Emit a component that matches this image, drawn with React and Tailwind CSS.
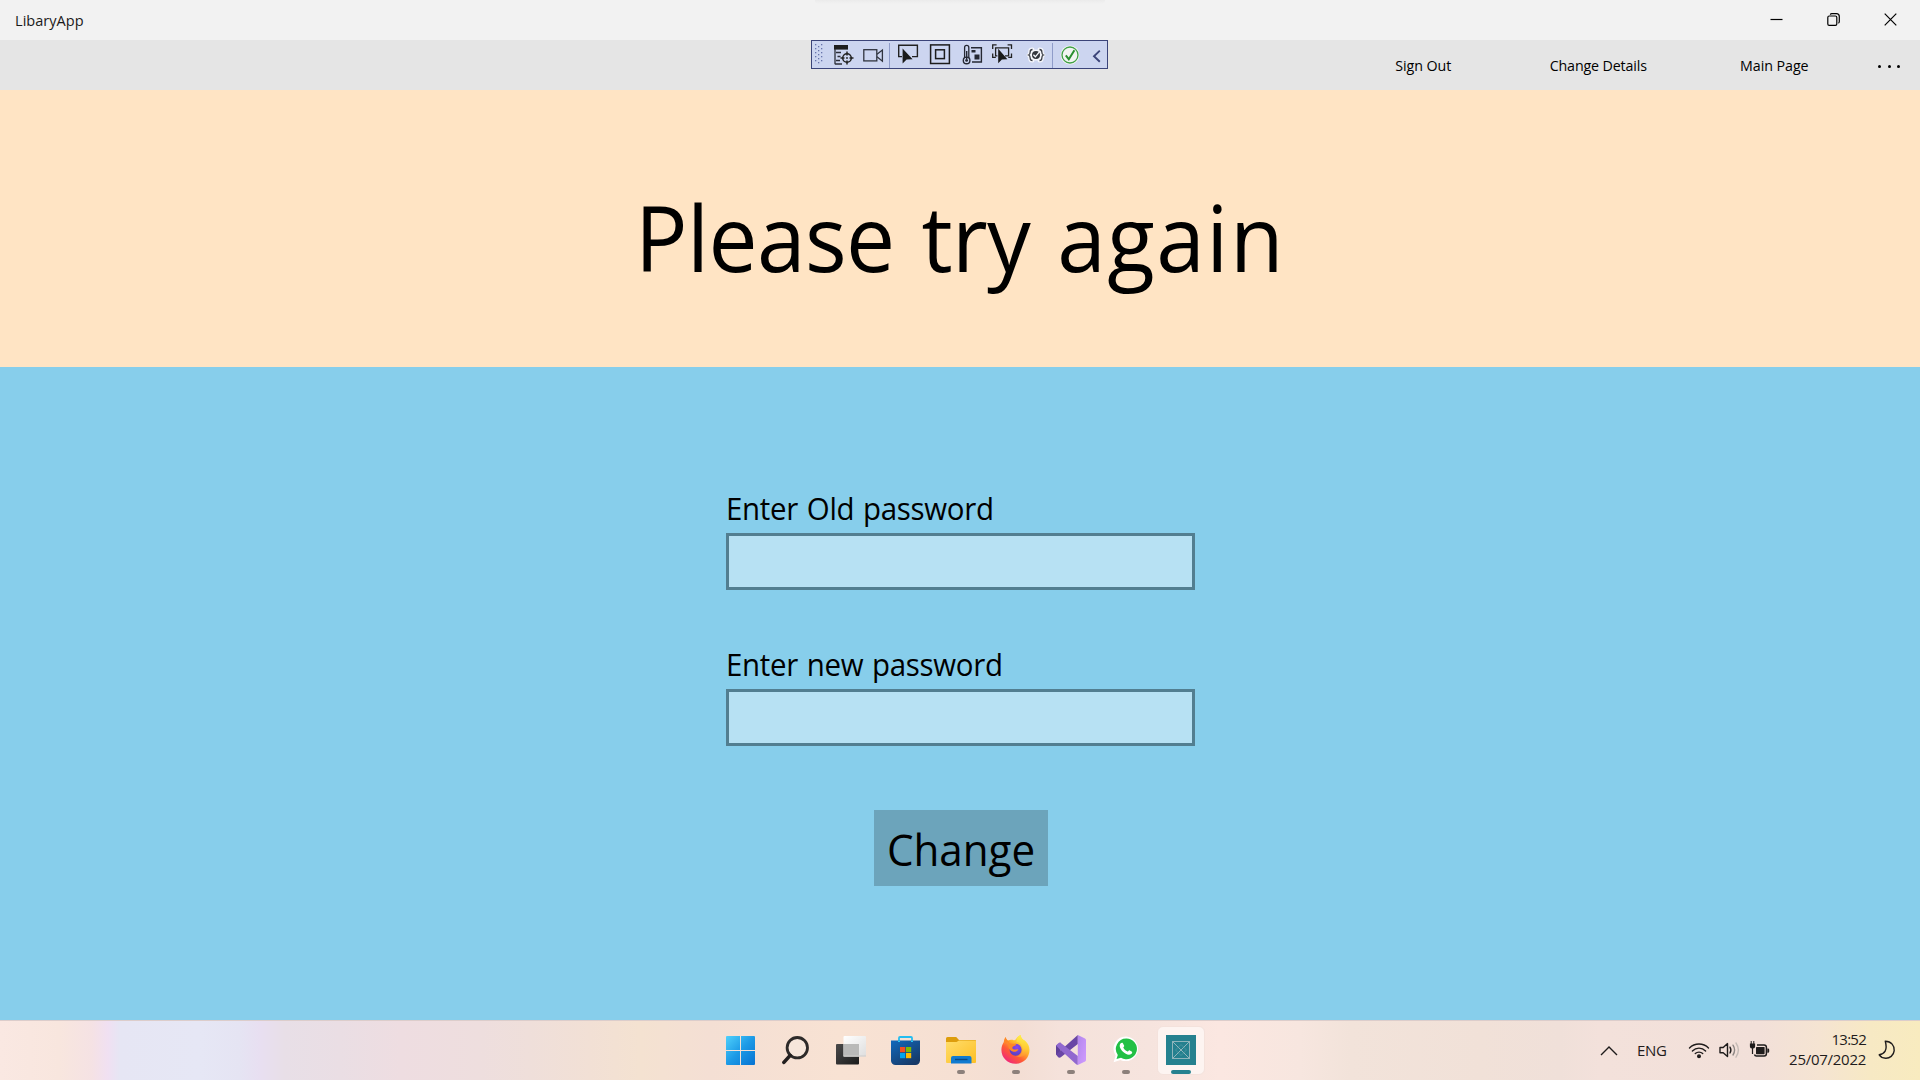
const NAV_ITEMS = [
  { label: "Sign Out", spacing: "tracking-[-0.05px] pr-px" },
  { label: "Change Details", spacing: "tracking-[-0.15px] pr-px" },
  { label: "Main Page", spacing: "tracking-[-0.05px] pr-px" },
];

function WindowControls() {
  return (
    <div className="flex h-full pr-px text-black">
      <button className="flex h-full w-[57px] items-center justify-center">
        <svg width="13" height="13" viewBox="0 0 13 13" fill="none" stroke="currentColor" strokeWidth="1.2">
          <path d="M0.5 6.5H12.5" />
        </svg>
      </button>
      <button className="flex h-full w-[57px] items-center justify-center">
        <svg width="13" height="13" viewBox="0 0 13 13" fill="none" stroke="currentColor" strokeWidth="1.2">
          <rect x="0.8" y="3" width="9" height="9.4" rx="1.4" />
          <path d="M3.2 1.6C3.6 1 4 0.7 4.8 0.7H9.4C11.2 0.7 12.3 1.8 12.3 3.6V8.6C12.3 9.4 12 9.9 11.4 10.2" />
        </svg>
      </button>
      <button className="flex h-full w-[57px] items-center justify-center">
        <svg width="13" height="13" viewBox="0 0 13 13" fill="none" stroke="currentColor" strokeWidth="1.2">
          <path d="M0.7 0.7L12.3 12.3M12.3 0.7L0.7 12.3" />
        </svg>
      </button>
    </div>
  );
}

function TitleBar() {
  return (
    <header className="relative flex h-10 items-center justify-between bg-[#f2f2f2]">
      <div className="absolute left-[815px] top-0 h-1 w-[290px] rounded-b-full bg-linear-to-b from-[#ebebeb] to-[#f2f2f2]" />
      <span className="origin-left scale-x-[0.97] pl-[15.5px] text-[15px] leading-5 text-[#1a1a1a]">LibaryApp</span>
      <div className="-mt-0.5 h-[38px]">
        <WindowControls />
      </div>
    </header>
  );
}

function Tool({ x, w, className, children }) {
  return (
    <svg width={w} height="27" viewBox={`${x} 1 ${w} 27`} fill="none" className={"shrink-0 " + className}>
      {children}
    </svg>
  );
}

const GRIP_ROWS = [4, 8, 12, 16, 20];

function Braces() {
  return (
    <path d="M221.5 9.5c-1.8 0-2.3.8-2.3 2.2 0 2-.2 2.8-1.5 3.3 1.3.5 1.5 1.3 1.5 3.3 0 1.4.5 2.2 2.3 2.2M228.5 9.5c1.8 0 2.3.8 2.3 2.2 0 2 .2 2.8 1.5 3.3-1.3.5-1.5 1.3-1.5 3.3 0 1.4-.5 2.2-2.3 2.2" />
  );
}

function DebugToolbar() {
  return (
    <div className="absolute left-[811px] top-0 flex h-[29px] w-[297px] border border-[#3b4479] bg-[#ccd5f0]">
      <Tool x={4} w={10} className="ml-[3px]">
        {GRIP_ROWS.map((y) => (
          <g key={y} fill="#6774ab">
            <rect x="4" y={y} width="1.3" height="1.3" />
            <rect x="10" y={y} width="1.3" height="1.3" />
            <rect x="7" y={y + 2} width="1.3" height="1.3" />
          </g>
        ))}
      </Tool>
      <Tool x={22} w={22} className="ml-2">
        <rect x="23" y="5" width="14" height="4.6" fill="#1e1e1e" />
        <path d="M24 9V24.2M25 12.5h5M26.5 16.5h3M25 20.5h4M24 24h7" stroke="#2c2f38" strokeWidth="1.3" />
        <circle cx="36" cy="18" r="4.3" stroke="#222" strokeWidth="1.5" />
        <path d="M36 11.5v4M36 20.5v4M29.5 18h4M38.5 18h4" stroke="#222" strokeWidth="1.5" />
        <circle cx="36" cy="18" r="0.9" fill="#222" />
      </Tool>
      <Tool x={51} w={22} className="ml-[7px]">
        <rect x="52.8" y="9.7" width="13" height="11.2" stroke="#30343f" strokeWidth="1.3" />
        <path d="M66 14.2L71.4 10V21.2L66 16.8" stroke="#30343f" strokeWidth="1.3" />
      </Tool>
      <Tool x={78} w={1} className="ml-[5px]">
        <rect x="78" y="3" width="1" height="25" fill="#8f9cc9" />
      </Tool>
      <Tool x={86} w={22} className="ml-[7px]">
        <path d="M91 16.6H87.7V5.2H106.4V16.6H101" stroke="#222" strokeWidth="1.4" />
        <path d="M91.6 8.6V23.4L95.6 19.4L101.6 19.2Z" fill="#1a1a1a" />
      </Tool>
      <Tool x={118} w={22} className="ml-[10px]">
        <rect x="119.6" y="4.9" width="18.8" height="18.6" stroke="#1c1c1c" strokeWidth="1.5" />
        <rect x="124.6" y="9.8" width="8.8" height="8.8" stroke="#1c1c1c" strokeWidth="1.5" />
      </Tool>
      <Tool x={150} w={22} className="ml-[10px]">
        <path d="M153.6 18V7.4a2.1 2.1 0 0 1 4.2 0V18" stroke="#252833" strokeWidth="1.3" />
        <circle cx="155.6" cy="20.4" r="3.3" stroke="#252833" strokeWidth="1.4" />
        <path d="M155.7 11v8" stroke="#252833" strokeWidth="1.4" />
        <circle cx="155.6" cy="20.4" r="1.4" fill="#252833" />
        <path d="M160 7.7H170.4V22H161" stroke="#252833" strokeWidth="1.4" />
        <path d="M160.5 10h4v2.4h-4zM163.5 14.5h5v5h-5z" fill="#252833" />
      </Tool>
      <Tool x={180} w={22} className="ml-2">
        <path d="M186.4 15.8H184.6V7.8H197.6V15.8H194" stroke="#222" strokeWidth="1.3" />
        <path d="M181.7 9V4.9H185.6M196.6 4.9H200.5V9M200.5 13.6V17.4H197.2M181.7 13.6V17.4H184.8" stroke="#222" strokeWidth="1.3" />
        <path d="M187.2 8.8V23.2L190.9 19.4L196.4 19.2Z" fill="#1a1a1a" />
      </Tool>
      <Tool x={215} w={20} className="ml-[13px]">
        <g stroke="#f5f6fb" strokeWidth="4" strokeLinecap="round" strokeLinejoin="round">
          <Braces />
        </g>
        <circle cx="225" cy="15" r="5.6" fill="#f5f6fb" />
        <g stroke="#3a3d45" strokeWidth="1.3">
          <Braces />
        </g>
        <circle cx="225" cy="15" r="4" fill="#33363d" />
        <path d="M222.4 14.8L224.4 16.8L228.8 11.4" stroke="#f5f6fb" strokeWidth="1.3" />
      </Tool>
      <Tool x={241} w={1} className="ml-1.5">
        <rect x="241" y="3" width="1" height="25" fill="#8f9cc9" />
      </Tool>
      <Tool x={249} w={20} className="ml-[7px]">
        <circle cx="259" cy="15" r="9.4" fill="#f4f6f4" />
        <circle cx="259" cy="15" r="8" fill="#f2f5f2" stroke="#3fa045" strokeWidth="1.3" />
        <path d="M254.8 15.4L257.8 19.2L263.4 10.2" stroke="#2a8f30" strokeWidth="2" />
      </Tool>
      <Tool x={280} w={11} className="ml-[11px]">
        <path d="M288.8 10.6L283 16.2L288.8 21.8" stroke="#3b4479" strokeWidth="1.9" />
      </Tool>
    </div>
  );
}

function CommandBar() {
  return (
    <nav className="relative flex h-[50px] items-center justify-end bg-[#e5e5e5]">
      <DebugToolbar />
      {NAV_ITEMS.map((item) => (
        <button
          key={item.label}
          className={"w-[175.5px] scale-x-[0.95] text-center text-[15px] leading-5 text-black " + item.spacing}
        >
          {item.label}
        </button>
      ))}
      <button className="flex h-full w-[58px] items-center justify-center gap-[6.5px] pr-[3.5px] pt-[3px]">
        <span className="size-[3px] rounded-full bg-black" />
        <span className="size-[3px] rounded-full bg-black" />
        <span className="size-[3px] rounded-full bg-black" />
      </button>
    </nav>
  );
}

function PasswordField({ id, label, className }) {
  return (
    <div className={"flex flex-col " + className}>
      <label
        htmlFor={id}
        className="origin-left scale-x-[0.95] text-[31px] leading-10 tracking-[-0.3px] [word-spacing:1.4px]"
      >
        {label}
      </label>
      <input id={id} type="password" className="mt-[5px] h-[57px] border-3 border-[#527e90] bg-[#b7e1f3] outline-none" />
    </div>
  );
}

function PasswordForm() {
  return (
    <form className="mx-auto flex w-[469px] flex-col pt-[121px] text-black">
      <PasswordField id="old" label="Enter Old password" className="" />
      <PasswordField id="new" label="Enter new password" className="mt-[54px]" />
      <button type="button" className="ml-[148px] mt-16 h-[76px] w-[174px] bg-[#6ca4bb] pt-1 text-black">
        <span className="block scale-x-[0.98] text-[43px] leading-[72px]">Change</span>
      </button>
    </form>
  );
}

function StartIcon() {
  return (
    <svg width="29" height="29" viewBox="0 0 29 29">
      <defs>
        <linearGradient id="start" x1="0" y1="0" x2="29" y2="29" gradientUnits="userSpaceOnUse">
          <stop offset="0" stopColor="#4fd0fb" />
          <stop offset="0.5" stopColor="#1c9ae6" />
          <stop offset="1" stopColor="#0672d2" />
        </linearGradient>
      </defs>
      <path fill="url(#start)" d="M1 0h13v14H0V1a1 1 0 0 1 1-1zM15 0h13a1 1 0 0 1 1 1v13H15zM0 15h14v14H1a1 1 0 0 1-1-1zM15 15h14v13a1 1 0 0 1-1 1H15z" />
    </svg>
  );
}

function SearchIcon() {
  return (
    <svg width="27" height="29" viewBox="0 0 27 29" fill="none">
      <circle cx="15.3" cy="11.7" r="10.2" fill="#f6e6db" stroke="#2d2a29" strokeWidth="2.8" />
      <path d="M8.2 19.4L1.9 26.4" stroke="#221f1f" strokeWidth="3.6" strokeLinecap="round" />
    </svg>
  );
}

function TaskViewIcon() {
  return (
    <svg width="30" height="29" viewBox="0 0 30 29">
      <defs>
        <linearGradient id="tvDark" x1="0" y1="0" x2="1" y2="1">
          <stop offset="0" stopColor="#4a4a4a" />
          <stop offset="1" stopColor="#1b1b1b" />
        </linearGradient>
        <linearGradient id="tvLight" x1="0" y1="0" x2="1" y2="1">
          <stop offset="0" stopColor="#fff" />
          <stop offset="1" stopColor="#dedede" />
        </linearGradient>
      </defs>
      <rect y="8" width="23" height="20.5" rx="1" fill="url(#tvDark)" />
      <rect x="7.5" width="22.5" height="20.5" rx="1" fill="url(#tvLight)" />
      <rect x="7.5" y="8" width="15.5" height="12.5" fill="#b9b9b8" />
      <path d="M7.5 20H30" stroke="#cfcdcb" />
    </svg>
  );
}

function StoreIcon() {
  return (
    <svg width="29" height="29" viewBox="0 0 29 29">
      <defs>
        <linearGradient id="store" x1="0" y1="0" x2="0.7" y2="1">
          <stop offset="0" stopColor="#1169bd" />
          <stop offset="1" stopColor="#173a68" />
        </linearGradient>
      </defs>
      <path d="M8 6V2a1 1 0 0 1 1-1h11a1 1 0 0 1 1 1v4" fill="none" stroke="#24bdf0" strokeWidth="1.8" />
      <path d="M0 4.5h29V24.5a4.5 4.5 0 0 1-4.5 4.5h-20A4.5 4.5 0 0 1 0 24.5z" fill="url(#store)" />
      <path d="M7 4.5h2V6H7zM20 4.5h2V6h-2z" fill="#2cc4f4" />
      <rect x="9" y="11" width="5.2" height="5.2" fill="#f25022" />
      <rect x="15" y="11" width="5.2" height="5.2" fill="#7fba00" />
      <rect x="9" y="17" width="5.2" height="5.2" fill="#00a4ef" />
      <rect x="15" y="17" width="5.2" height="5.2" fill="#ffb900" />
    </svg>
  );
}

function ExplorerIcon() {
  return (
    <svg width="30" height="27" viewBox="0 0 30 27">
      <defs>
        <linearGradient id="folder" x1="0" y1="0" x2="1" y2="1">
          <stop offset="0" stopColor="#ffdd6b" />
          <stop offset="1" stopColor="#fdbf24" />
        </linearGradient>
      </defs>
      <path d="M0 1.500A1.500 1.500 0 0 1 1.500 0h8.700l2.800 3H29a1 1 0 0 1 1 1v6H0z" fill="#dd9d0c" />
      <path d="M0 5h10.500l2.500-1.500H29a1 1 0 0 1 1 1V25a1 1 0 0 1-1 1H1a1 1 0 0 1-1-1z" fill="url(#folder)" />
      <path d="M5 26.500V21a2 2 0 0 1 2-2h16.500a2 2 0 0 1 2 2v5.500z" fill="#117bd0" />
      <path d="M9 22.500h12.500" stroke="#0a4a86" strokeWidth="1.4" />
    </svg>
  );
}

function FirefoxIcon() {
  return (
    <svg width="29" height="29" viewBox="0 0 29 29">
      <defs>
        <linearGradient id="ffBody" x1="0.85" y1="0.1" x2="0.2" y2="0.95">
          <stop offset="0" stopColor="#fff04a" />
          <stop offset="0.35" stopColor="#ffb52a" />
          <stop offset="0.65" stopColor="#ff5b35" />
          <stop offset="1" stopColor="#f0257d" />
        </linearGradient>
        <linearGradient id="ffFlame" x1="0.5" y1="0" x2="0.4" y2="1">
          <stop offset="0" stopColor="#fff04a" />
          <stop offset="0.6" stopColor="#ffc933" />
          <stop offset="1" stopColor="#ff8a33" />
        </linearGradient>
        <radialGradient id="ffGlobe" cx="0.6" cy="0.3" r="0.8">
          <stop offset="0" stopColor="#8a48ee" />
          <stop offset="1" stopColor="#4f3fbd" />
        </radialGradient>
      </defs>
      <path d="M4.500 2c.5 1.600 1.200 2.600 2.300 3.400 2-.7 4-.8 6-.2C14.500 5.400 15 4 15.300 3.600 16.400 1.600 18.200.4 19.600 0c.2 2.400 1 3.600 3 5 1 .4 1.600.8 2 1.300C27.200 8.800 28.500 11.400 28.500 15c0 7.800-6.200 13.800-14 13.800S.4 22.800.4 15c0-3.200.9-5.600 2.300-7.700C3 5.400 3.600 3.600 4.500 2z" fill="url(#ffBody)" />
      <path d="M19.600 0c-2.600 1.200-4.600 4-3.900 7 3.600.5 6 3.200 6 7.200 0 3.700-2.700 6.800-6.700 7.300 6.800 1.800 12.700-2.500 12.300-8.500-.2-3-2-5.400-4.200-7.400C21 3.700 19.800 2.400 19.600 0z" fill="url(#ffFlame)" />
      <circle cx="14.6" cy="14.8" r="6" fill="url(#ffGlobe)" />
      <path d="M4.500 2c-1 2-1.500 4.500-1.300 7.400C4.500 7.500 7 6.700 9.500 8.500c1.500.5 4-.2 5.800.7-.3 1.600-2.600 1.700-3.800 2.800-.4 1.300.4 2.300 1.600 2.500 1.500.2 2.700-.7 4.300-.2-1 2.300-3 2.800-4.900 2.400-3-.7-5.100-2.800-5-5.600C6.500 9 7 7.500 9 7 6.800 6.200 5.200 4.800 4.500 2z" fill="#ff8727" />
    </svg>
  );
}

function VisualStudioIcon() {
  return (
    <svg width="30" height="30" viewBox="0 0 30 30">
      <defs>
        <linearGradient id="vsRight" x1="0" y1="0" x2="1" y2="1">
          <stop offset="0" stopColor="#b287ec" />
          <stop offset="1" stopColor="#d09bff" />
        </linearGradient>
      </defs>
      <path d="M0 10.500L4.600 7.500V22.300L0 19.600z" fill="#5f3f98" />
      <path d="M0 19.600L21.800 0V9L4.800 22.300Q3 23.200 2 22z" fill="#6a46a6" />
      <path d="M0 10.500L2.300 8.200Q3.600 7.200 4.800 7.900L21.800 21V30Q20.500 30 19.300 28.600L4 14.500z" fill="#9168cf" />
      <path d="M21.800 0L29 3.400Q30 4 30 5V25Q30 26 29 26.600L21.800 30z" fill="url(#vsRight)" />
    </svg>
  );
}

function WhatsAppIcon() {
  return (
    <svg width="26" height="27" viewBox="0 0 26 27">
      <path d="M13.200.5A12.300 12.300 0 1 1 7.400 23.900L.6 26.200 2.600 19.500A12.300 12.300 0 0 1 13.200.5z" fill="#fff" />
      <path d="M13.200 2.500A10.400 10.400 0 1 1 8 21.700L3.500 23.100 4.800 18.900A10.400 10.400 0 0 1 13.200 2.500z" fill="#22c044" />
      <path d="M9.900 7.200c-.4-.8-1.600-.6-2.200.1-2 2.300-.6 5.500 2 8.200 2.800 2.700 6.100 4.200 8.500 2.500 1-.7 1.200-2 .8-2.300l-2.600-1.400c-.7-.3-1.200 1.400-1.900 1.300-1.700-.6-3.500-2.400-4.200-4 0-.7 1.100-1.200.9-1.900z" fill="#fff" />
    </svg>
  );
}

function AppTileIcon() {
  return (
    <svg width="30" height="30" viewBox="0 0 30 30" fill="none">
      <rect width="30" height="30" fill="#25818f" />
      <rect x="6.500" y="6.500" width="17" height="17" stroke="#8fb5bb" />
      <path d="M6.500 6.500L23.500 23.500M23.500 6.500L6.500 23.500" stroke="#8fb5bb" />
      <path d="M15 9.500L20.500 15L15 20.500L9.500 15z" stroke="#5a9da7" strokeWidth="0.6" />
    </svg>
  );
}

const APPS = [
  { name: "Start", icon: <StartIcon />, open: false, shift: "" },
  { name: "Search", icon: <SearchIcon />, open: false, shift: "" },
  { name: "Task View", icon: <TaskViewIcon />, open: false, shift: "" },
  { name: "Store", icon: <StoreIcon />, open: false, shift: "" },
  { name: "File Explorer", icon: <ExplorerIcon />, open: true, shift: "" },
  { name: "Firefox", icon: <FirefoxIcon />, open: true, shift: "pb-px" },
  { name: "Visual Studio", icon: <VisualStudioIcon />, open: true, shift: "pb-px" },
  { name: "WhatsApp", icon: <WhatsAppIcon />, open: true, shift: "pb-px" },
];

function SystemTray() {
  return (
    <div className="ml-auto flex h-full items-center text-[#1f1c1c]">
      <svg width="18" height="10" viewBox="0 0 18 10" fill="none" stroke="currentColor" strokeWidth="1.4">
        <path d="M1 9L9 1L17 9" />
      </svg>
      <span className="-mt-0.5 ml-[19px] w-[31px] text-[15px] leading-5 tracking-[-0.3px]">ENG</span>
      <svg className="ml-5 -mt-0.5" width="22" height="18" viewBox="0 0 22 18" fill="none" stroke="currentColor" strokeWidth="1.4" strokeLinecap="round">
        <path d="M1.500 7A13.400 13.400 0 0 1 20.500 7" />
        <path d="M4.400 9.900A9.300 9.300 0 0 1 17.600 9.900" />
        <path d="M7.300 12.600A5.300 5.300 0 0 1 14.700 12.600" />
        <circle cx="11" cy="15.2" r="1.3" fill="currentColor" />
      </svg>
      <svg className="ml-[9px] -mt-0.5" width="22" height="18" viewBox="0 0 22 18" fill="none" stroke="currentColor" strokeWidth="1.4" strokeLinecap="round" strokeLinejoin="round">
        <path d="M1 6.500H4.200L8.500 2.600V15.600L4.200 11.800H1z" />
        <path d="M11 6.200Q12.800 9.100 11 12" />
        <path d="M14 4.200Q17.200 9.100 14 14" stroke="#8f8885" />
        <path d="M17 2Q21.800 9.100 17 16.200" stroke="#c5bbb6" />
      </svg>
      <svg className="ml-2 -mt-0.5" width="22" height="18" viewBox="0 0 22 18" fill="none">
        <path d="M8 4H15.200A2.200 2.200 0 0 1 17.400 6.200V12.800A2.200 2.200 0 0 1 15.200 15H7.400A2 2 0 0 1 5.500 13.500" stroke="currentColor" strokeWidth="1.5" />
        <rect x="7" y="6" width="8.6" height="7.2" rx="0.6" fill="currentColor" />
        <path d="M18.300 7.500h.7a1.200 1.200 0 0 1 1.200 1.200v1.800A1.200 1.200 0 0 1 19 11.700h-.7z" fill="currentColor" />
        <path d="M1.700 0h1V2.400h1.600V0h1V2.400h.8v3a2 2 0 0 1-2 2v5.500H2.900V7.400a2 2 0 0 1-2-2V2.400h.8z" fill="currentColor" />
      </svg>
      <div className="-mt-1 ml-[18px] w-[77px] text-right text-[15px] leading-5">
        <div className="tracking-[-0.75px]">13:52</div>
        <div className="whitespace-nowrap tracking-[-0.27px]">25/07/2022</div>
      </div>
      <svg className="-mt-0.5 ml-3 mr-6" width="18" height="20" viewBox="0 0 18 20" fill="none" stroke="currentColor" strokeWidth="1.4" strokeLinejoin="round">
        <path d="M7.300 1.200C13.300 1.400 16.600 5.600 16.200 10.600C15.700 15.600 11.600 18.400 7.600 18.200C4.600 18 2.500 16.800 1.200 14.800C6.400 13.800 9.800 10.400 7.300 1.200z" />
      </svg>
    </div>
  );
}

function Taskbar() {
  return (
    <footer className="flex h-[60px] border-t border-[#dccdcb] bg-[linear-gradient(90deg,#fae8e2_0px,#f8e6de_60px,#f5e2e4_92px,#f0e0f2_108px,#e6e6f4_120px,#e6e7f5_200px,#e5e4f3_240px,#e8dff1_260px,#e8dfe7_285px,#eadee4_340px,#eedde1_400px,#eedede_480px,#efdfda_530px,#f2e0d5_590px,#f4e2d1_640px,#f4dfd4_710px,#f8e2d3_840px,#f6e0d3_960px,#f3ded4_1020px,#f5e2db_1060px,#f6e4de_1150px,#fbe7e1_1220px,#f7e6df_1300px,#f2e3da_1350px,#f1e1d8_1480px,#f0e0d9_1560px,#f3e1db_1600px,#f2e0d9_1760px,#f5e4d2_1820px,#f7e9c4_1870px,#f8ebbf_1920px)] pl-[713px]">
      {APPS.map((app) => (
        <div key={app.name} className="flex w-[55px] flex-col items-center">
          <div className={"flex h-[49px] w-full items-end justify-center " + app.shift}>
            <div className="flex h-[39px] w-full items-center justify-center">{app.icon}</div>
          </div>
          {app.open && <div className="h-1 w-2 rounded-full bg-[#8c807b]" />}
        </div>
      ))}
      <div className="flex w-[55px] justify-center pt-[5px]">
        <div className="flex h-[49px] w-12 flex-col items-center justify-between rounded-md border border-[#f4e2dc] bg-[#fdf4f1] pt-2">
          <AppTileIcon />
          <div className="h-1 w-5 rounded-full bg-[#25818f]" />
        </div>
      </div>
      <SystemTray />
    </footer>
  );
}

export default function App() {
  return (
    <div className="flex h-[1080px] w-[1920px] flex-col overflow-hidden font-['Open_Sans','Noto_Sans',sans-serif]">
      <TitleBar />
      <CommandBar />
      <section className="h-[277px] bg-[#ffe4c4] pt-[97px]">
        <h1 className="scale-x-[0.95] text-center text-[92px] leading-[100px] tracking-[-0.6px] text-black [word-spacing:5px]">
          Please try <span className="tracking-[1.6px]">again</span>
        </h1>
      </section>
      <main className="flex-1 bg-[#87ceeb]">
        <PasswordForm />
      </main>
      <Taskbar />
    </div>
  );
}
